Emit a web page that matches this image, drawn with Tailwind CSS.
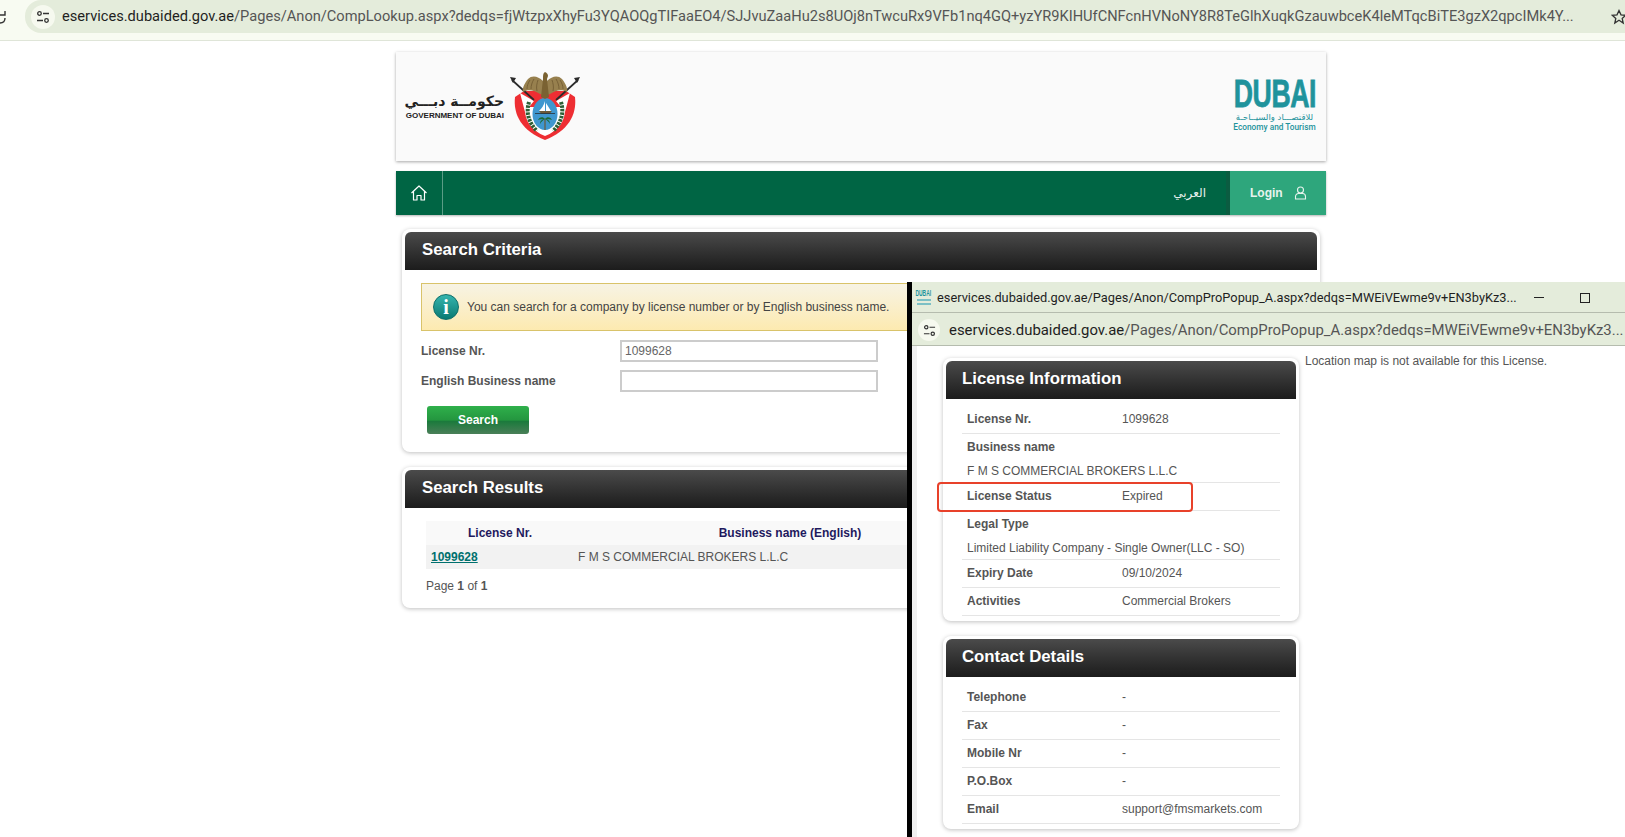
<!DOCTYPE html>
<html lang="en">
<head>
    <meta charset="UTF-8">
    <title>Company Lookup</title>
    <script src="https://cdn.jsdelivr.net/npm/@tailwindcss/browser@4"></script>
</head>
<body class="bg-white font-['Liberation_Sans',sans-serif] text-[12px] text-[#555] overflow-hidden">
<div class="relative h-[837px] w-[1625px] overflow-hidden">

    <!-- Browser address bar -->
    <div class="h-[41px] bg-[#f8fbf2] border-b border-[#dfe5d8] flex">
        <svg class="w-[6px] h-[34px] shrink-0" viewBox="0 0 6 34" fill="none" stroke="#333" stroke-width="1.400"><path d="M0 23c3 0 5-2 5-5M0 15h5v-4"/></svg>
        <div class="ml-[19px] flex-1 h-[33px] rounded-l-[16px] bg-[#e4ecdb] flex items-center">
            <div class="ml-[6px] w-[24px] h-[24px] rounded-full bg-[#f6f9ef] flex items-center justify-center shrink-0">
                <svg class="w-[14px] h-[14px]" viewBox="0 0 14 14" fill="none" stroke="#333" stroke-width="1.300"><circle cx="3.500" cy="3.500" r="1.800"/><path d="M7 3.500h6M1 10.500h6"/><circle cx="10.500" cy="10.500" r="1.800"/></svg>
            </div>
            <div class="ml-[7px] w-[1536px] whitespace-nowrap overflow-hidden font-['Roboto',sans-serif] text-[14.630px] text-[#555]"><span class="text-[#1f1f1f]">eservices.dubaided.gov.ae</span>/Pages/Anon/CompLookup.aspx?dedqs=fjWtzpxXhyFu3YQAOQgTIFaaEO4/SJJvuZaaHu2s8UOj8nTwcuRx9VFb1nq4GQ+yzYR9KIHUfCNFcnHVNoNY8R8TeGlhXuqkGzauwbceK4leMTqcBiTE3gzX2qpcIMk4Y...</div>
            <svg class="ml-[13px] w-[16px] h-[16px] shrink-0" viewBox="0 0 16 16" fill="none" stroke="#333" stroke-width="1.300"><path d="M8 1.500l2 4.300 4.700.5-3.500 3.200 1 4.600L8 11.300l-4.200 2.800 1-4.600L1.300 6.300 6 5.800z"/></svg>
        </div>
    </div>

    <!-- Page -->
    <div class="ml-[396px] w-[930px] pt-[11px]">
        <!-- Logos -->
        <header class="h-[109px] bg-[#fafafa] shadow-[0_1px_3px_rgba(0,0,0,0.35)] flex items-start">
            <div class="ml-[10px] mt-[40px] w-[98px] flex flex-col items-end text-[#222]">
                <div dir="rtl" class="font-['DejaVu_Sans',sans-serif] text-[14px] leading-[18px] font-bold whitespace-nowrap">حكومــة دبـــي</div>
                <div class="mt-[1px] text-[8px] leading-[9px] font-bold whitespace-nowrap">GOVERNMENT OF DUBAI</div>
            </div>
            <!-- Emblem -->
            <svg class="ml-[6px] mt-[19px] w-[70px] h-[70px]" viewBox="0 0 70 70">
                <path d="M5 26C3 44 12 60 35 69C58 60 67 44 65 26L56 20H14z" fill="#ee2e33"/>
                <path d="M10 22L24 30L15 41ZM60 22L46 30L55 41Z" fill="#fff"/>
                <path d="M15 36C14 50 22 60 35 65C48 60 56 50 55 36Z" fill="#fff"/>
                <path d="M2 9l22 20M68 9L46 29" stroke="#2b2b2b" stroke-width="1.700"/>
                <path d="M0 6l6 1-3 5zM70 6l-6 1 3 5z" fill="#2b2b2b"/>
                <path d="M19 31c-3 10-1 20 8 29M51 31c3 10 1 20-8 29" stroke="#2d5f35" stroke-width="4" stroke-dasharray="2.500 1" fill="none"/>
                <ellipse cx="35" cy="43" rx="12.500" ry="16" fill="#3f97cf"/>
                <path d="M29 40h13l-2 2.500H31z" fill="#6b5a3a"/>
                <path d="M35 30v10h-6c3-3 5-6 6-10zM36 32l5 8h-5z" fill="#fff"/>
                <path d="M25 42.500h20" stroke="#222" stroke-width=".7"/>
                <path d="M35 48v11" stroke="#6b5a3a" stroke-width="1.200"/>
                <path d="M35 48c-2-3-6-2-7 1 2-1 4-1 7-1zm0 0c2-3 6-2 7 1-2-1-4-1-7-1zm0 0c-3 0-5 2-5 5 1-2 3-4 5-5zm0 0c3 0 5 2 5 5-1-2-3-4-5-5z" fill="#1d6a37"/>
                <path d="M33 10C28 5 22 4 18 8C14 13 12 18 13 21C18 18 24 19 30 23L33 24Z" fill="#97804e"/>
                <path d="M37 10C42 5 48 4 52 8C56 13 58 18 57 21C52 18 46 19 40 23L37 24Z" fill="#97804e"/>
                <path d="M31 26L33 8C33 4 33 2 35 1C37 2 38 3 38 5L37 8L39 26L35 28Z" fill="#7a6232"/>
                <path d="M20 9c-2 3-3 6-3 9M24 8c-2 3-3 7-3 10M28 9c-1 3-2 7-1 11M50 9c2 3 3 6 3 9M46 8c2 3 3 7 3 10M42 9c1 3 2 7 1 11" stroke="#6e5830" stroke-width=".8" fill="none"/>
            </svg>
            <!-- Dubai Economy and Tourism -->
            <div class="ml-auto mr-[10px] mt-[28px] w-[83px] flex flex-col items-center text-[#1f939c]">
                <div class="h-[28px] text-[38px] leading-[28px] font-bold tracking-[-0.5px] whitespace-nowrap scale-x-[0.7] [-webkit-text-stroke:0.8px_#1f939c]">DUBAI</div>
                <div dir="rtl" class="mt-[4px] font-['DejaVu_Sans',sans-serif] text-[8.500px] leading-[10px] whitespace-nowrap">للاقتصـــاد والسيــاحـة</div>
                <div class="text-[8.300px] leading-[10px] font-['Roboto',sans-serif] font-medium whitespace-nowrap">Economy and Tourism</div>
            </div>
        </header>

        <!-- Nav -->
        <nav class="mt-[10px] h-[44px] bg-[#006544] shadow-[0_1px_2px_rgba(0,0,0,0.3)] flex items-stretch text-white">
            <div class="w-[47px] border-r border-[#5b9c86] flex items-center justify-center">
                <svg class="w-[18px] h-[18px]" viewBox="0 0 18 18" fill="none" stroke="#fff" stroke-width="1.200" stroke-linejoin="round"><path d="M1.500 9L9 2l7.500 7M3.500 7.500V16h3.500v-4.500h4V16h3.500V7.500"/></svg>
            </div>
            <div dir="rtl" class="ml-auto mr-[20px] self-center font-['DejaVu_Sans',sans-serif] text-[12px] text-[#e6f0ec]">العربي</div>
            <div class="w-[4px] bg-[#0b5c41]"></div>
            <div class="w-[96px] bg-[#2ea67c] flex items-center text-[#e8f3ee]">
                <span class="ml-[20px] text-[12px] font-bold">Login</span>
                <svg class="ml-[11px] w-[13px] h-[14px]" viewBox="0 0 13 14" fill="none" stroke="#e8f3ee" stroke-width="1.100"><circle cx="6.500" cy="4" r="3"/><path d="M1.500 13v-2.500a3 3 0 0 1 3-3h4a3 3 0 0 1 3 3V13z"/></svg>
            </div>
        </nav>

        <!-- Search criteria -->
        <section class="ml-[6px] mt-[14px] w-[918px] h-[223px] p-[3px] bg-white rounded-[8px] shadow-[0_1px_4px_rgba(0,0,0,0.25)]">
            <h2 class="h-[38px] pl-[17px] rounded-t-[6px] bg-gradient-to-b from-[#4b4b4b] to-[#1c1c1c] text-white text-[16.800px] font-bold leading-[36px]">Search Criteria</h2>
            <div class="px-[16px] pt-[13px]">
                <div class="h-[48px] border border-[#d9c36a] bg-gradient-to-b from-[#f7f3e4] to-[#fdeab0] flex items-center">
                    <div class="ml-[11px] w-[26px] h-[26px] rounded-full bg-gradient-to-b from-[#35b5ae] to-[#067a73] border border-[#0d6e69] flex items-center justify-center text-white font-['Liberation_Serif',serif] font-bold text-[20px] leading-none">i</div>
                    <span class="ml-[8px] text-[12px] text-[#444]">You can search for a company by license number or by English business name.</span>
                </div>
                <div class="mt-[9px] grid grid-cols-[199px_258px] gap-y-[8px] items-center font-bold">
                    <label>License Nr.</label>
                    <input type="text" value="1099628" class="h-[22px] border-2 border-[#ccc] px-[3px] text-[12px] font-normal text-[#666] outline-none">
                    <label>English Business name</label>
                    <input type="text" class="h-[22px] border-2 border-[#ccc] px-[3px] outline-none">
                </div>
                <button class="ml-[6px] mt-[14px] block w-[102px] h-[28px] rounded-[3px] bg-[linear-gradient(#2fb04b,#24963f_50%,#1b7a3c_55%,#4a7f58)] text-white font-bold text-[12px]">Search</button>
            </div>
        </section>

        <!-- Search results -->
        <section class="ml-[6px] mt-[15px] w-[918px] h-[141px] p-[3px] bg-white rounded-[8px] shadow-[0_1px_4px_rgba(0,0,0,0.25)]">
            <h2 class="h-[38px] pl-[17px] rounded-t-[6px] bg-gradient-to-b from-[#4b4b4b] to-[#1c1c1c] text-white text-[16.800px] font-bold leading-[36px]">Search Results</h2>
            <div class="px-[21px] pt-[13px]">
                <table class="w-[873px] table-fixed border-collapse">
                    <thead>
                        <tr class="h-[24px] bg-[#f9f9f9] text-[#1f1a5e] font-bold">
                            <th class="w-[148px]">License Nr.</th>
                            <th class="w-[432px]">Business name (English)</th>
                            <th></th>
                        </tr>
                    </thead>
                    <tbody>
                        <tr class="h-[24px] bg-[#f2f2f2]">
                            <td class="pl-[5px]"><a href="#" class="font-bold text-[#00706e] underline">1099628</a></td>
                            <td class="pl-[4px]">F M S COMMERCIAL BROKERS L.L.C</td>
                            <td></td>
                        </tr>
                    </tbody>
                </table>
                <div class="mt-[8px]">Page <b>1</b> of <b>1</b></div>
            </div>
        </section>
    </div>

    <!-- Popup window -->
    <div class="absolute left-[907px] top-[282px] w-[718px] h-[555px] bg-white border-l-[5px] border-black overflow-hidden">
        <div class="h-[31px] pt-[1px] bg-[#e4ecdb] border-b border-[#b5bcae] flex items-center">
            <div class="ml-[3px] w-[17px] h-[17px] shrink-0 flex flex-col items-center text-[#1f939c] font-bold leading-none">
                <span class="text-[9px] h-[9px] leading-[9px] scale-x-[0.55] whitespace-nowrap">DUBAI</span>
                <span class="mt-[1px] w-[14px] h-[6px] border-y-2 border-[#7cc0c5]"></span>
            </div>
            <div class="ml-[5px] w-[586px] whitespace-nowrap font-['Roboto',sans-serif] text-[12.800px] text-[#1f1f1f]">eservices.dubaided.gov.ae/Pages/Anon/CompProPopup_A.aspx?dedqs=MWEiVEwme9v+EN3byKz3...</div>
            <div class="ml-[11px] w-[10px] h-[1.500px] bg-[#222]"></div>
            <div class="ml-[36px] w-[10px] h-[10px] border border-[#222]"></div>
        </div>
        <div class="h-[33px] pt-[2px] bg-[#e4ecdb] border-b border-[#b5bcae] flex items-center">
            <div class="ml-[6px] w-[22px] h-[22px] rounded-full bg-[#f6f9ef] flex items-center justify-center shrink-0">
                <svg class="w-[13px] h-[13px]" viewBox="0 0 14 14" fill="none" stroke="#333" stroke-width="1.300"><circle cx="3.500" cy="3.500" r="1.800"/><path d="M7 3.500h6M1 10.500h6"/><circle cx="10.500" cy="10.500" r="1.800"/></svg>
            </div>
            <div class="ml-[9px] whitespace-nowrap font-['Roboto',sans-serif] text-[14.900px] text-[#555]"><span class="text-[#1f1f1f]">eservices.dubaided.gov.ae</span>/Pages/Anon/CompProPopup_A.aspx?dedqs=MWEiVEwme9v+EN3byKz3...</div>
        </div>
        <div class="flex items-start">
            <div class="w-[5px] h-[491px] bg-[#f0f0f0] shrink-0"></div>
            <div class="ml-[26px] pt-[12px] w-[356px] shrink-0">
                <section class="h-[263px] p-[3px] bg-white rounded-[8px] shadow-[0_1px_4px_rgba(0,0,0,0.25)]">
                    <h2 class="h-[38px] pl-[16px] rounded-t-[6px] bg-gradient-to-b from-[#4b4b4b] to-[#1c1c1c] text-white text-[16.800px] font-bold leading-[36px]">License Information</h2>
                    <div class="mx-[16px] pt-[7px]">
                        <div class="h-[28px] pl-[5px] pb-[2px] border-b border-[#e5e5e5] flex items-center"><b class="w-[155px]">License Nr.</b><span>1099628</span></div>
                        <div class="h-[49px] pl-[5px] pt-[2px] border-b border-[#e5e5e5] flex flex-col justify-center gap-[10px]"><b class="leading-[14px]">Business name</b><span class="leading-[14px]">F M S COMMERCIAL BROKERS L.L.C</span></div>
                        <div class="relative h-[28px] pl-[5px] pb-[2px] border-b border-[#e5e5e5] flex items-center"><b class="w-[155px]">License Status</b><span>Expired</span>
                            <div class="absolute left-[-25px] top-[-1px] w-[256px] h-[30px] border-2 border-[#e8412a] rounded-[4px]"></div>
                        </div>
                        <div class="h-[49px] pl-[5px] pt-[2px] border-b border-[#e5e5e5] flex flex-col justify-center gap-[10px]"><b class="leading-[14px]">Legal Type</b><span class="leading-[14px]">Limited Liability Company - Single Owner(LLC - SO)</span></div>
                        <div class="h-[28px] pl-[5px] pb-[2px] border-b border-[#e5e5e5] flex items-center"><b class="w-[155px]">Expiry Date</b><span>09/10/2024</span></div>
                        <div class="h-[28px] pl-[5px] pb-[2px] border-b border-[#e5e5e5] flex items-center"><b class="w-[155px]">Activities</b><span>Commercial Brokers</span></div>
                    </div>
                </section>
                <section class="mt-[15px] h-[193px] p-[3px] bg-white rounded-[8px] shadow-[0_1px_4px_rgba(0,0,0,0.25)]">
                    <h2 class="h-[38px] pl-[16px] rounded-t-[6px] bg-gradient-to-b from-[#4b4b4b] to-[#1c1c1c] text-white text-[16.800px] font-bold leading-[36px]">Contact Details</h2>
                    <div class="mx-[16px] pt-[7px]">
                        <div class="h-[28px] pl-[5px] pb-[2px] border-b border-[#e5e5e5] flex items-center"><b class="w-[155px]">Telephone</b><span>-</span></div>
                        <div class="h-[28px] pl-[5px] pb-[2px] border-b border-[#e5e5e5] flex items-center"><b class="w-[155px]">Fax</b><span>-</span></div>
                        <div class="h-[28px] pl-[5px] pb-[2px] border-b border-[#e5e5e5] flex items-center"><b class="w-[155px]">Mobile Nr</b><span>-</span></div>
                        <div class="h-[28px] pl-[5px] pb-[2px] border-b border-[#e5e5e5] flex items-center"><b class="w-[155px]">P.O.Box</b><span>-</span></div>
                        <div class="h-[28px] pl-[5px] pb-[2px] border-b border-[#e5e5e5] flex items-center"><b class="w-[155px]">Email</b><span>support@fmsmarkets.com</span></div>
                    </div>
                </section>
            </div>
            <p class="ml-[6px] mt-[6px] whitespace-nowrap">Location map is not available for this License.</p>
        </div>
    </div>
</div>
</body>
</html>
